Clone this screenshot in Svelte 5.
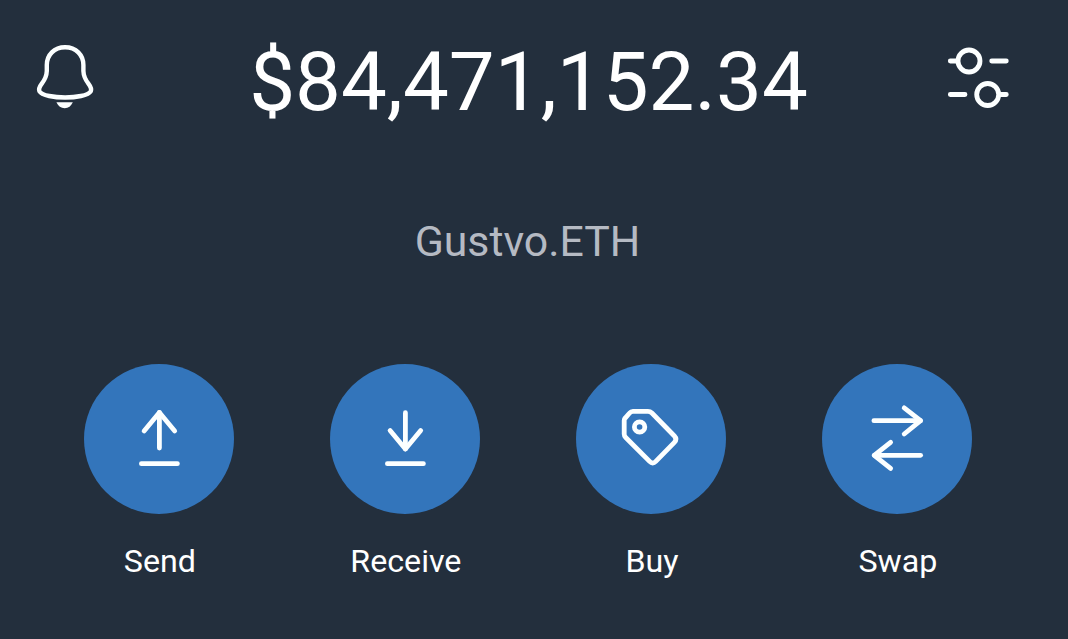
<script>
  const actions = [
    { label: 'Send', lines: ['M75 84V48.5', 'M59.7 67L75 48.5L90.3 67', 'M57 99.7H93'] },
    { label: 'Receive', lines: ['M75 48.7V85', 'M59.7 66.5L75 85L90.3 66.5', 'M57 99.7H93'] },
    {
      label: 'Buy',
      lines: [
        'M56.5 47.3H71.5Q73.8 47.3 75.5 49L98 72Q101 75.2 98 78.3L79.4 97.4Q76.3 100.6 73.2 97.4L49.3 73.5Q47.8 72 47.8 70V56.5Q47.8 55 49 53.8L53.2 49Q54.6 47.3 56.5 47.3Z'
      ],
      hole: true
    },
    {
      label: 'Swap',
      lines: ['M51.5 56.7H98', 'M81.8 43.9L98.2 56.7L81.8 70', 'M98.2 91.3H52', 'M68.2 78.3L51.8 91.3L68.2 104.4']
    }
  ];
</script>

<main>
  <header>
    <button aria-label="Notifications">
      <svg class="bell" width="64" height="72" viewBox="0 0 64 72">
        <path d="M30.5 7.3C19.5 7.3 12.3 15 12.2 25V31C12 37 10 40 7.2 43.6C5 46.5 3.9 49 4.8 51.2C7.2 55.6 20 57.5 30.5 57.5S53.8 55.6 56.2 51.2C57.1 49 56 46.5 53.8 43.6C51 40 49 37 48.8 31V25C48.7 15 41.5 7.3 30.5 7.3Z" transform="translate(.6 0)" />
        <path class="solid" d="M22.4 62.2H38.8C37 66 34.5 68.2 30.7 68.2S24.2 66 22.4 62.2Z" />
      </svg>
    </button>
    <h1>$84,471,152.34</h1>
    <button aria-label="Settings">
      <svg width="69" height="72" viewBox="0 0 69 72">
        <circle cx="25" cy="17" r="11" />
        <circle cx="43.7" cy="50.5" r="11" />
        <path d="M6.3 17H12M47.7 17H62.3M6.3 50.5H21M57 50.5H62.3" />
      </svg>
    </button>
  </header>

  <p class="account">Gustvo.ETH</p>

  <nav>
    {#each actions as action}
      <button class="action">
        <span class="disc">
          <svg width="150" height="150" viewBox="-0.4 0 150 150">
            {#each action.lines as d}
              <path {d} />
            {/each}
            {#if action.hole}
              <circle cx="63.2" cy="63" r="5.2" />
            {/if}
          </svg>
        </span>
        <span class="label">{action.label}</span>
      </button>
    {/each}
  </nav>
</main>

<style>
  :global(body) {
    margin: 0;
    background: #232f3d;
  }

  main {
    box-sizing: border-box;
    height: 639px;
    padding-top: 34px;
    background: #232f3d;
    color: #fff;
    font-family: Roboto, sans-serif;
    overflow: hidden;
  }

  header {
    display: grid;
    grid-template-columns: 69px 1fr 69px;
    height: 96px;
    padding: 0 55px 0 34px;
  }

  button {
    display: block;
    padding: 0;
    border: 0;
    background: none;
    color: inherit;
    font: inherit;
  }

  header button {
    height: 72px;
    margin-top: 10px;
    text-align: left;
  }

  svg {
    display: block;
    fill: none;
    stroke: #fcffff;
    stroke-width: 4.8;
    stroke-linecap: round;
    stroke-linejoin: round;
  }

  .bell {
    margin-top: -8px;
    stroke-width: 4.4;
  }

  .solid {
    fill: #fcffff;
    stroke: none;
  }

  h1 {
    margin: 0;
    padding-left: 10px;
    font-size: 81.7px;
    font-weight: 400;
    line-height: 96px;
    text-align: center;
    white-space: nowrap;
  }

  .account {
    margin: 85px 0 0;
    padding-right: 13px;
    color: #b5bac3;
    font-size: 42.8px;
    line-height: 52px;
    text-align: center;
  }

  nav {
    display: grid;
    grid-template-columns: repeat(4, 150px);
    column-gap: 96px;
    padding: 97px 0 0 84.4px;
  }

  .disc {
    display: block;
    width: 150px;
    height: 150px;
    border-radius: 50%;
    background: #3375bb;
  }

  .label {
    display: block;
    margin-top: 27px;
    padding-left: 1px;
    font-size: 32.2px;
    line-height: 40px;
    text-align: center;
  }
</style>
